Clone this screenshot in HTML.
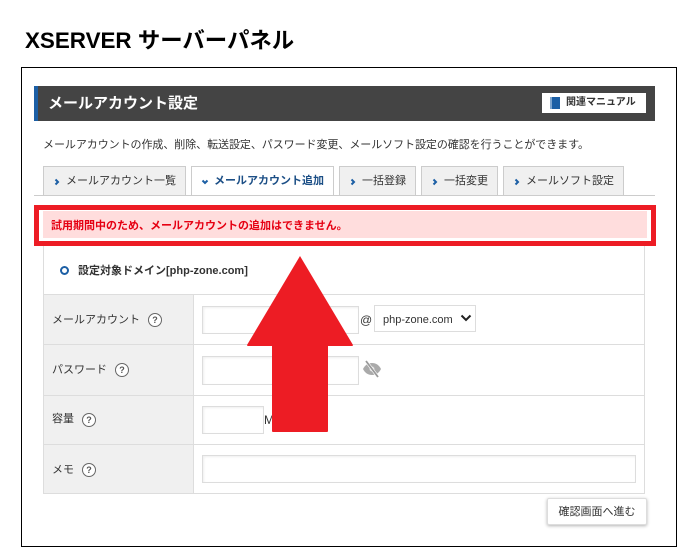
<!DOCTYPE html>
<html lang="ja">
<head>
<meta charset="utf-8">
<style>
html,body{margin:0;padding:0;background:#fff;}
body{width:700px;height:560px;position:relative;overflow:hidden;font-family:"Liberation Sans","Noto Sans CJK JP",sans-serif;color:#333;}
.a{position:absolute;box-sizing:border-box;white-space:nowrap;}
.tab{top:166px;height:30px;border:1px solid #ccc;border-bottom:none;background:#f0f0f0;font-size:11px;line-height:28px;padding-left:22px;color:#333;}
.tab svg{position:absolute;left:9px;top:11px;}
.line{left:43px;width:602px;height:1px;background:#ddd;}
.lab{left:44px;width:149px;background:#f0f0f0;}
.t{font-size:11px;line-height:16px;left:52px;color:#333;}
.q{width:14px;height:14px;border:1px solid #666;border-radius:50%;font-size:9px;line-height:12px;text-align:center;color:#555;font-weight:bold;background:#fff;}
.in{background:#fff;border:1px solid #ddd;box-shadow:inset 1px 1px 2px #eee;}
</style>
</head>
<body>
<div class="a" style="left:25px;top:25px;font-size:22.4px;line-height:32px;font-weight:bold;color:#000;">XSERVER サーバーパネル</div>
<div class="a" style="left:21px;top:67px;width:656px;height:480px;border:1px solid #000;"></div>

<div class="a" style="left:34px;top:86px;width:621px;height:35px;background:#444;border-left:4px solid #1c5fa5;"></div>
<div class="a" style="left:48px;top:93px;font-size:15px;line-height:21px;font-weight:bold;color:#fff;">メールアカウント設定</div>
<div class="a" style="left:542px;top:93px;width:104px;height:20px;background:#fff;"></div>
<div class="a" style="left:550px;top:97px;width:10px;height:12px;background:#1c5fa5;border-left:2px solid #7fa6cf;"></div>
<div class="a" style="left:566px;top:95px;font-size:10px;line-height:15px;font-weight:bold;color:#333;">関連マニュアル</div>

<div class="a" style="left:43px;top:137px;font-size:11px;letter-spacing:-0.06px;line-height:16px;color:#333;">メールアカウントの作成、削除、転送設定、パスワード変更、メールソフト設定の確認を行うことができます。</div>

<div class="a tab" style="left:43px;width:143px;"><svg width="8" height="8" viewBox="0 0 8 8"><path d="M2.5 1.5L5 4 2.5 6.5" fill="none" stroke="#1c5fa5" stroke-width="2"/></svg>メールアカウント一覧</div>
<div class="a tab" style="left:191px;width:143px;background:#fff;color:#1c4f86;font-weight:bold;"><svg width="8" height="8" viewBox="0 0 8 8"><path d="M1.5 2.5L4 5 6.5 2.5" fill="none" stroke="#1c5fa5" stroke-width="2"/></svg>メールアカウント追加</div>
<div class="a tab" style="left:339px;width:77px;"><svg width="8" height="8" viewBox="0 0 8 8"><path d="M2.5 1.5L5 4 2.5 6.5" fill="none" stroke="#1c5fa5" stroke-width="2"/></svg>一括登録</div>
<div class="a tab" style="left:421px;width:77px;"><svg width="8" height="8" viewBox="0 0 8 8"><path d="M2.5 1.5L5 4 2.5 6.5" fill="none" stroke="#1c5fa5" stroke-width="2"/></svg>一括変更</div>
<div class="a tab" style="left:503px;width:121px;"><svg width="8" height="8" viewBox="0 0 8 8"><path d="M2.5 1.5L5 4 2.5 6.5" fill="none" stroke="#1c5fa5" stroke-width="2"/></svg>メールソフト設定</div>
<div class="a" style="left:34px;top:195px;width:621px;height:1px;background:#ccc;"></div>

<!-- table -->
<div class="a" style="left:43px;top:246px;width:1px;height:248px;background:#ddd;"></div>
<div class="a" style="left:644px;top:246px;width:1px;height:248px;background:#ddd;"></div>
<div class="a lab" style="top:294px;height:199px;"></div>
<div class="a" style="left:193px;top:294px;width:1px;height:199px;background:#ddd;"></div>
<div class="a line" style="top:294px;"></div>
<div class="a line" style="top:344px;"></div>
<div class="a line" style="top:395px;"></div>
<div class="a line" style="top:444px;"></div>
<div class="a line" style="top:493px;"></div>

<div class="a" style="left:60px;top:266px;width:9px;height:9px;border:2px solid #1c5fa5;border-radius:50%;"></div>
<div class="a" style="left:78px;top:263px;font-size:11px;line-height:16px;font-weight:bold;color:#333;">設定対象ドメイン[php-zone.com]</div>

<div class="a t" style="top:312px;">メールアカウント</div>
<div class="a q" style="left:148px;top:313px;">?</div>
<div class="a in" style="left:202px;top:306px;width:157px;height:28px;"></div>
<div class="a" style="left:360px;top:312px;font-size:12px;line-height:16px;color:#333;">@</div>
<div class="a" style="left:374px;top:305px;width:102px;height:27px;border:1px solid #ddd;background:#fff;"></div>
<div class="a" style="left:383px;top:312px;font-size:11px;line-height:16px;color:#333;">php-zone.com</div>
<svg class="a" style="left:460px;top:314px;" width="12" height="8" viewBox="0 0 12 8"><path d="M1.5 1.5L6 6l4.5-4.5" fill="none" stroke="#222" stroke-width="2"/></svg>

<div class="a t" style="top:362px;">パスワード</div>
<div class="a q" style="left:115px;top:363px;">?</div>
<div class="a in" style="left:202px;top:356px;width:157px;height:29px;"></div>
<svg class="a" style="left:362px;top:360px;" width="20" height="18" viewBox="0 0 20 18"><path d="M1 9c2-4 5-6 9-6s7 2 9 6c-2 4-5 6-9 6s-7-2-9-6z" fill="#aaa"/><circle cx="10" cy="9" r="2.5" fill="#ddd"/><path d="M4 1l12 16" stroke="#fff" stroke-width="3"/><path d="M4 1l12 16" stroke="#999" stroke-width="1.8"/></svg>

<div class="a t" style="top:411px;">容量</div>
<div class="a q" style="left:82px;top:413px;">?</div>
<div class="a in" style="left:202px;top:406px;width:62px;height:28px;"></div>
<div class="a" style="left:264px;top:412px;font-size:12px;line-height:16px;color:#333;">MB</div>

<div class="a t" style="top:462px;">メモ</div>
<div class="a q" style="left:82px;top:463px;">?</div>
<div class="a in" style="left:202px;top:455px;width:434px;height:28px;"></div>

<div class="a" style="left:547px;top:498px;width:100px;height:27px;background:#fff;border:1px solid #ddd;border-radius:2px;box-shadow:0 1px 3px rgba(0,0,0,.3);font-size:11px;line-height:26px;text-align:center;color:#333;">確認画面へ進む</div>

<!-- red notice -->
<div class="a" style="left:34px;top:205px;width:622px;height:41px;border:5px solid #ed1c24;background:#fff;"></div>
<div class="a" style="left:43px;top:211px;width:604px;height:27px;background:#ffdddd;"></div>
<div class="a" style="left:51px;top:218px;font-size:11px;line-height:16px;font-weight:bold;color:#e60012;">試用期間中のため、メールアカウントの追加はできません。</div>

<!-- arrow -->
<svg class="a" style="left:0;top:0;" width="700" height="560" viewBox="0 0 700 560"><path d="M300 256L353 345Q353 346 352 346L328 346L328 431Q328 432 327 432L273 432Q272 432 272 431L272 346L248 346Q247 346 247 345Z" fill="#ed1c24"/></svg>
</body>
</html>
